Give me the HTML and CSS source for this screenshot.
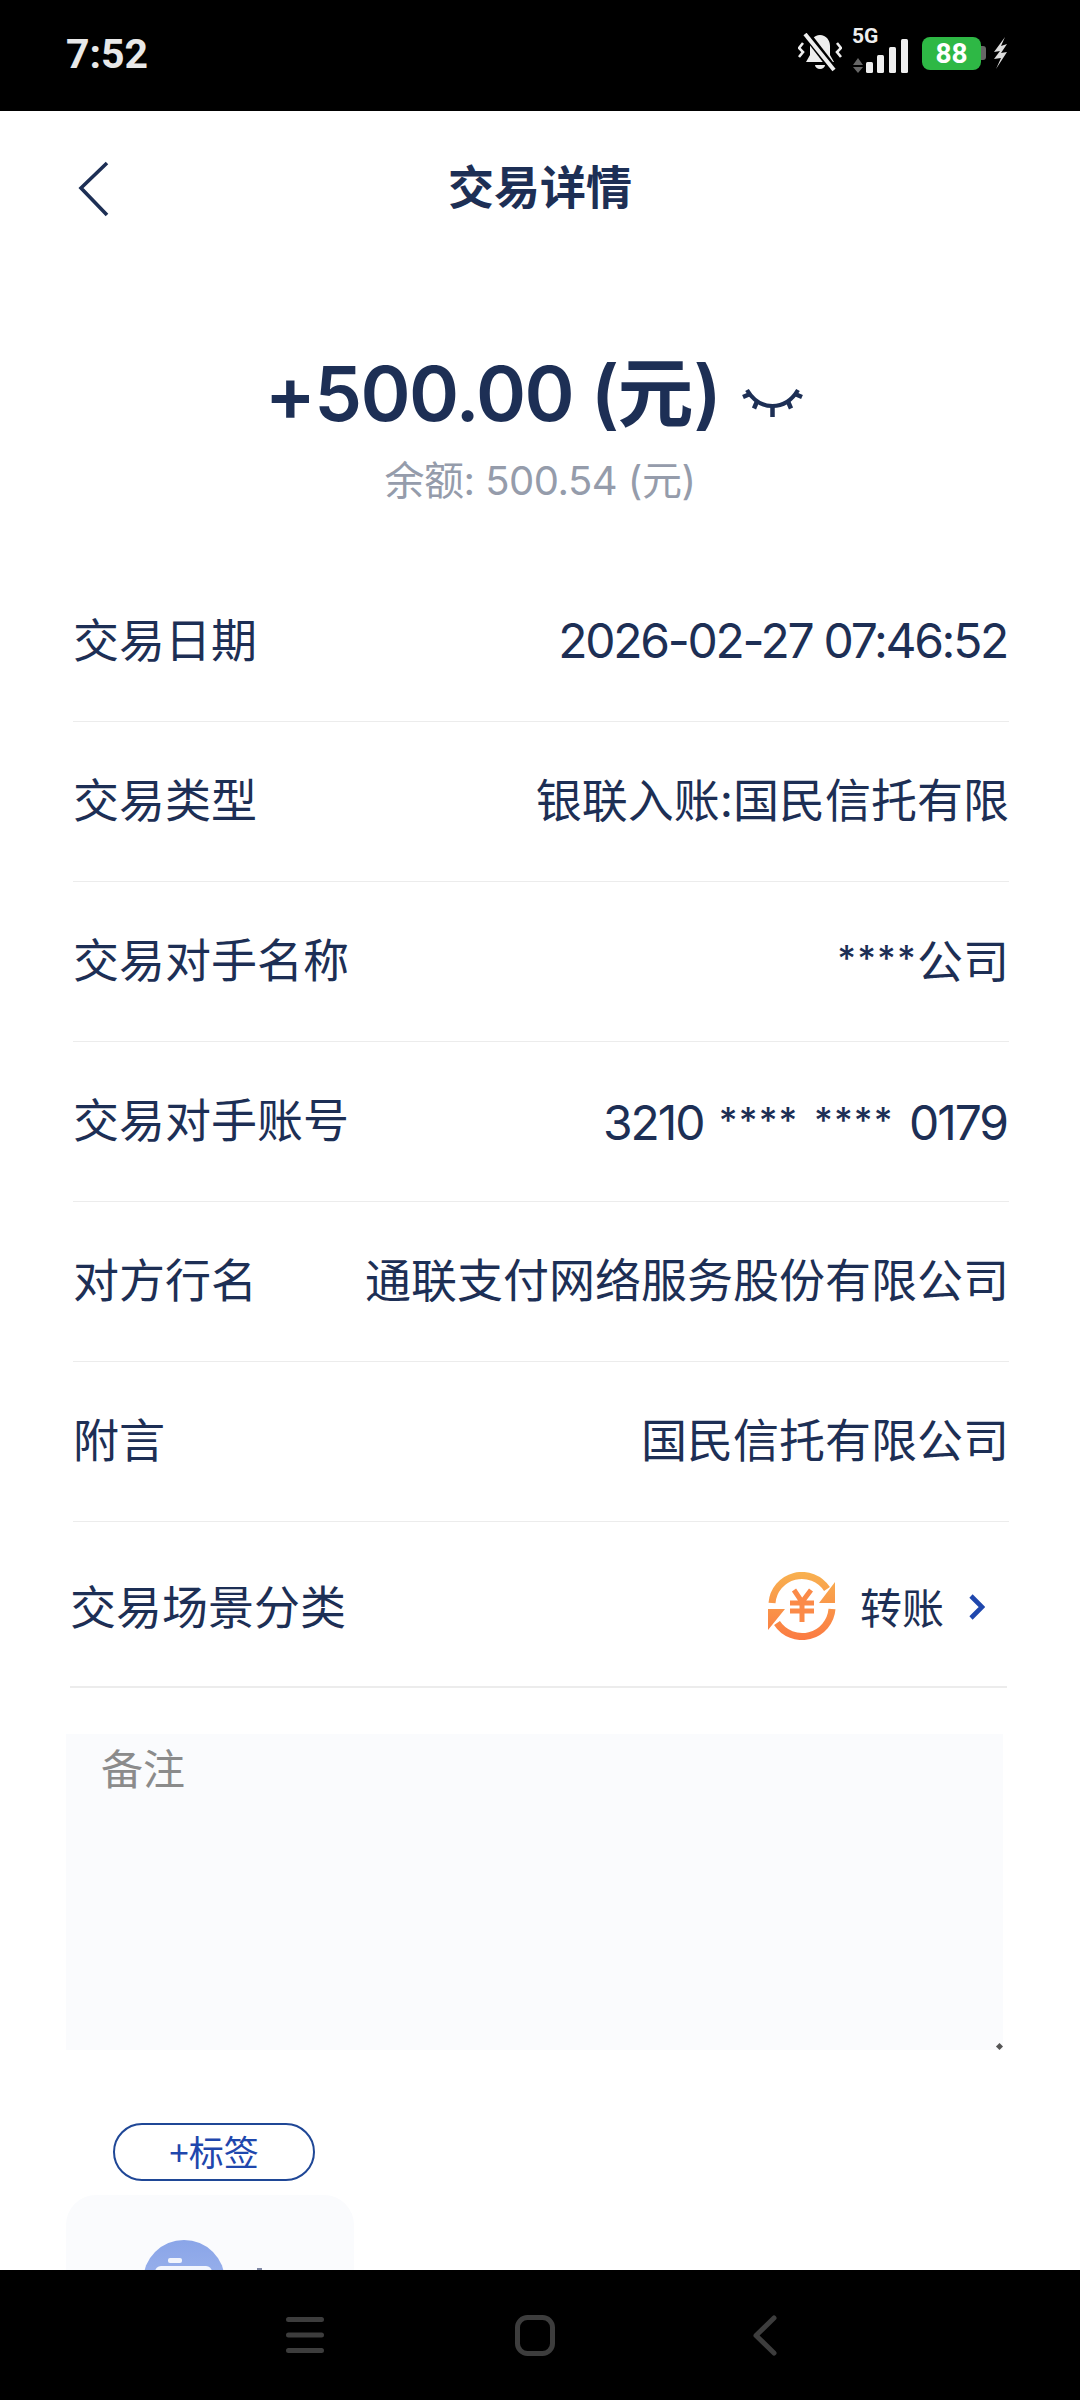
FILE: index.html
```html
<!DOCTYPE html>
<html lang="zh-CN">
<head>
<meta charset="utf-8">
<title>交易详情</title>
<link rel="stylesheet" href="styles.css">
</head>
<body>
<div class="phone">
  <div class="status">
    <span class="time">7:52</span>
    <div class="status-icons">
      <svg class="i-bell" width="44" height="40" viewBox="0 0 44 40">
        <path d="M22 2c6 0 10 5 10 11v9l4 7H8l4-7v-9c0-6 4-11 10-11z" fill="#eee"/>
        <path d="M17 32h10a5 4 0 0 1-10 0z" fill="#eee"/>
        <path d="M9 2l27 35" stroke="#000" stroke-width="8"/>
        <path d="M7 1l29 36" stroke="#eee" stroke-width="4"/>
        <path d="M5 10L1 15l4 4-4 5" stroke="#eee" stroke-width="2.6" fill="none"/>
        <path d="M39 10l4 5-4 4 4 5" stroke="#eee" stroke-width="2.6" fill="none"/>
      </svg>
      <div class="net">
        <span class="net-5g">5G</span>
        <svg width="56" height="34" viewBox="0 0 56 34">
          <path d="M1 26l5-7 5 7zM1 28h10l-5 6z" fill="#666"/>
          <rect x="14" y="23" width="7" height="11" rx="1.5" fill="#eee"/>
          <rect x="25" y="16" width="7" height="18" rx="1.5" fill="#eee"/>
          <rect x="37" y="8" width="7" height="26" rx="1.5" fill="#eee"/>
          <rect x="49" y="0" width="7" height="34" rx="1.5" fill="#eee"/>
        </svg>
      </div>
      <div class="battery"><span class="batt-body">88</span><span class="batt-cap"></span></div>
      <svg class="bolt" width="15" height="32" viewBox="0 0 15 32"><path d="M12 0L1 15l6-1-6 8 7-1-5 11 11-17-6 1 6-9-6 2z" fill="#ddd"/></svg>
    </div>
  </div>

  <header class="topbar">
    <svg class="back" width="34" height="56" viewBox="0 0 34 56"><path d="M30 2L4 27l26 27" fill="none" stroke="#1d2f55" stroke-width="3.6"/></svg>
    <h1 class="title">交易详情</h1>
  </header>

  <section class="summary">
    <div class="amount-line">
      <span class="amount"><span class="amount-num">+500.00 (</span>元<span class="amount-num">)</span></span>
      <svg class="eye" width="65" height="32" viewBox="0 0 65 32">
        <path d="M7 4C13 14 22 20 32.500 20S52 14 58 4" fill="none" stroke="#1d2f55" stroke-width="4.200"/>
        <path d="M3 11l7-3M14 22.500l3-7M32.500 31V19M51 22.500l-3-7M62 11l-7-3" stroke="#1d2f55" stroke-width="4.500" fill="none"/>
      </svg>
    </div>
    <div class="balance">余额: 500.54 (元)</div>
  </section>

  <section class="rows">
    <div class="row"><span>交易日期</span><span class="num date">2026-02-27 07:46:52</span></div>
    <div class="row"><span>交易类型</span><span>银联入账:国民信托有限</span></div>
    <div class="row"><span>交易对手名称</span><span><span class="star">****</span>公司</span></div>
    <div class="row"><span>交易对手账号</span><span class="num acct">3210 <span class="star">****</span> <span class="star">****</span> 0179</span></div>
    <div class="row"><span>对方行名</span><span>通联支付网络服务股份有限公司</span></div>
    <div class="row"><span>附言</span><span>国民信托有限公司</span></div>
  </section>

  <div class="scene">
    <span>交易场景分类</span>
    <div class="scene-value">
      <svg class="scene-icon" width="68" height="68" viewBox="0 0 68 68">
        <defs><linearGradient id="og" gradientUnits="userSpaceOnUse" x1="0" y1="0" x2="0" y2="68"><stop offset="0" stop-color="#f8b150"/><stop offset="1" stop-color="#fb7a42"/></linearGradient></defs>
        <path d="M4 31A30 30 0 0 1 59 17" fill="none" stroke="url(#og)" stroke-width="7"/>
        <path d="M64 37A30 30 0 0 1 9 51" fill="none" stroke="url(#og)" stroke-width="7"/>
        <path d="M67 10V31H51zM0 37H17L0 58z" fill="url(#og)"/>
        <path d="M26 18l8 12 9-12M22 31h24M22 39h24M34 30v20" fill="none" stroke="#fb8a48" stroke-width="5"/>
      </svg>
      <span class="scene-text">转账</span>
      <svg class="chev" width="16" height="26" viewBox="0 0 16 26"><path d="M2 2l11 11L2 24" fill="none" stroke="#1f47ad" stroke-width="4.600"/></svg>
    </div>
  </div>

  <div class="memo"><span class="memo-ph">备注</span><i class="memo-grip"></i></div>

  <div class="tag-wrap"><span class="tag">+标签</span></div>

  <div class="card">
    <div class="card-row">
      <div class="card-avatar"><i class="avatar-a"></i><i class="avatar-b"></i></div>
      <i class="card-dot"></i>
    </div>
  </div>

  <nav class="navbar">
    <svg width="38" height="36" viewBox="0 0 38 36"><path d="M2.500 2.500h33M2.500 18h33M2.500 33.500h33" stroke="#3d3d3d" stroke-width="5" stroke-linecap="round"/></svg>
    <svg width="40" height="41" viewBox="0 0 40 41"><rect x="2.500" y="2.500" width="35" height="36" rx="10" fill="none" stroke="#3d3d3d" stroke-width="5"/></svg>
    <svg width="24" height="41" viewBox="0 0 24 41"><path d="M21 3L3 20.500 21 38" fill="none" stroke="#3d3d3d" stroke-width="5" stroke-linecap="round" stroke-linejoin="round"/></svg>
  </nav>
</div>
</body>
</html>
```
FILE: styles.css
```css
* { box-sizing: border-box; }
html, body { margin: 0; padding: 0; background: #fff; }
body { font-family: "Noto Sans CJK SC", "Noto Sans", sans-serif; color: #1d2f55; }
.phone { position: relative; width: 1080px; height: 2400px; overflow: hidden; background: #fff; }

.status { height: 111px; background: #000; display: flex; justify-content: space-between; align-items: center; padding: 0 72px 0 66px; }
.time { font-family: Roboto, sans-serif; font-weight: 700; font-size: 41px; color: #e8e8e8; line-height: 1; margin-bottom: 2px; }
.status-icons { display: flex; align-items: center; margin-bottom: 5px; }
.net { position: relative; width: 56px; height: 40px; margin-left: 10px; display: flex; align-items: flex-end; }
.net-5g { position: absolute; left: 0; top: -7px; font: 700 21px/1 Roboto, sans-serif; color: #eee; }
.battery { display: flex; align-items: center; margin-left: 14px; }
.batt-body { width: 59px; height: 33px; border-radius: 8px; background: #2eb845; color: #fff; font: 700 28px/33px Roboto, sans-serif; text-align: center; }
.batt-cap { width: 5px; height: 14px; background: #666; border-radius: 0 3px 3px 0; }
.bolt { margin-left: 7px; }

.topbar { position: relative; height: 154px; display: flex; align-items: center; justify-content: center; padding-bottom: 9px; }
.back { position: absolute; left: 77px; top: 50px; }
.title { margin: 0; font-size: 46px; font-weight: 700; color: #1d2f55; line-height: 1; }

.summary { height: 297px; padding-top: 80px; display: flex; flex-direction: column; align-items: center; }
.amount-line { display: flex; align-items: center; gap: 20px; margin-right: 10px; height: 96px; }
.amount { font-size: 76px; font-weight: 600; font-family: "Inter", "Noto Sans CJK SC", sans-serif; line-height: 96px; color: #1d2f55; }
.amount-num { letter-spacing: -1.6px; }
.eye { margin-top: 18px; }
.balance { margin-top: 15px; font-size: 40px; line-height: 50px; color: #959cab; font-family: "Inter", "Noto Sans CJK SC", sans-serif; letter-spacing: -0.5px; }

.rows { margin: 0 71px 0 73px; }
.row { height: 160px; padding-bottom: 4px; display: flex; justify-content: space-between; align-items: center; border-bottom: 1px solid #ececec; font-size: 46px; line-height: 60px; font-family: "Inter", "Noto Sans CJK SC", sans-serif; color: #1d2f55; }
.num { font-size: 48px; letter-spacing: -2.1px; padding-top: 3px; padding-right: 2px; }
.date { letter-spacing: -2.3px; }
.acct { word-spacing: 4px; }
.star { font-size: 36px; font-weight: 500; letter-spacing: 1.2px; vertical-align: 7px; }

.scene { height: 166px; margin: 0 73px 0 70px; display: flex; justify-content: space-between; align-items: center; border-bottom: 2px solid #ececec; font-size: 46px; }
.scene-value { display: flex; align-items: center; margin-right: 22px; margin-top: 3px; }
.scene-icon { margin-top: 1px; }
.scene-text { font-size: 42px; margin-left: 24px; }
.chev { margin-left: 25px; margin-top: 2px; }

.memo { position: relative; height: 316px; margin: 46px 77px 0 66px; background: #fafbfd; padding: 2px 35px; }
.memo-ph { font-size: 42px; color: #8b8b8b; }
.memo-grip { position: absolute; right: 1px; bottom: 1px; width: 5px; height: 5px; background: #555; transform: rotate(45deg); }

.tag-wrap { margin: 73px 0 0 113px; }
.tag { display: flex; justify-content: center; align-items: center; width: 202px; height: 58px; padding-bottom: 3px; border: 2px solid #1f4796; border-radius: 29px; font-size: 35px; color: #1f47ad; }

.card { width: 288px; height: 200px; margin: 14px 0 0 66px; background: #fafbfd; border-radius: 30px; padding: 45px 0 0 77px; }
.card-row { display: flex; align-items: flex-start; }
.card-avatar { position: relative; width: 82px; height: 82px; border-radius: 50%; background: linear-gradient(#8aa5e8, #a7bcef); overflow: hidden; }
.avatar-a { position: absolute; left: 25px; top: 18px; width: 14px; height: 5px; border-radius: 2px; background: #f2f5fd; }
.avatar-b { position: absolute; left: 12px; top: 26px; width: 57px; height: 40px; border: 5px solid #f2f5fd; border-radius: 6px; }
.card-dot { width: 5px; height: 8px; margin: 28px 0 0 32px; background: #7e86a3; }

.navbar { position: absolute; left: 0; right: 0; bottom: 0; height: 130px; background: #000; padding: 0 0 0 190px; display: grid; grid-template-columns: repeat(3, 230px); justify-items: center; align-items: center; }
```
